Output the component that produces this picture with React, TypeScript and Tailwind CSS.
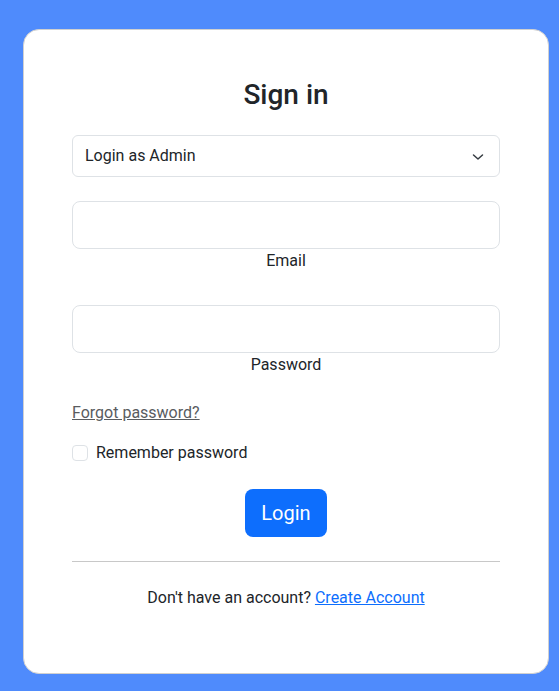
import { useState } from 'react'

const font = { fontFamily: 'Roboto, "Noto Sans", sans-serif' }

export default function App() {
  const [remember, setRemember] = useState(false)

  return (
    <div className="min-h-[691px] bg-[#4f8bfc] pt-[29px] pb-[16px]" style={font}>
      <div className="ml-[23px] w-[526px] rounded-[16px] border border-[#d0d0d0] bg-white px-[48px] pt-[48px] pb-[63px] text-[#212529]">
        <h3 className="text-center text-[28px] leading-[34px] font-medium">Sign in</h3>

        {/* role select */}
        <div className="relative mt-[23px] flex h-[42px] items-center rounded-[6px] border border-[#dee2e6] pl-[12px] text-[16px]">
          <span>Login as Admin</span>
          <svg className="absolute right-[13px] top-[13px]" width="16" height="16" viewBox="0 0 16 16" fill="none">
            <path d="m3.5 6 4.5 4 4.5-4" stroke="#343a40" strokeWidth="1.5" strokeLinecap="round" strokeLinejoin="round" />
          </svg>
        </div>

        <input className="mt-[24px] block h-[48px] w-full rounded-[8px] border border-[#dee2e6] px-3 outline-none" />
        <label className="block text-center text-[16px] leading-6">Email</label>

        <input type="password" className="mt-[32px] block h-[48px] w-full rounded-[8px] border border-[#dee2e6] px-3 outline-none" />
        <label className="block text-center text-[16px] leading-6">Password</label>

        <a href="#" className="mt-[24px] block w-fit text-[16px] leading-6 text-[#595c5f] underline">
          Forgot password?
        </a>

        <label className="mt-[16px] flex h-6 items-center gap-[8px] text-[16px]">
          <input
            type="checkbox"
            checked={remember}
            onChange={() => setRemember(!remember)}
            className="h-[16px] w-[16px] appearance-none rounded-[4px] border border-[#dee2e6] bg-white"
          />
          Remember password
        </label>

        <div className="mt-[24px] flex justify-center">
          <button className="h-[48px] rounded-[8px] bg-[#0d6efd] px-[16px] text-[20px] text-white">Login</button>
        </div>

        <hr className="mt-[24px] border-t border-[#c8c8c8]" />

        <p className="mt-[24px] text-center text-[16px] leading-6">
          Don't have an account?{' '}
          <a href="#" className="text-[#0d6efd] underline">
            Create Account
          </a>
        </p>
      </div>
    </div>
  )
}
